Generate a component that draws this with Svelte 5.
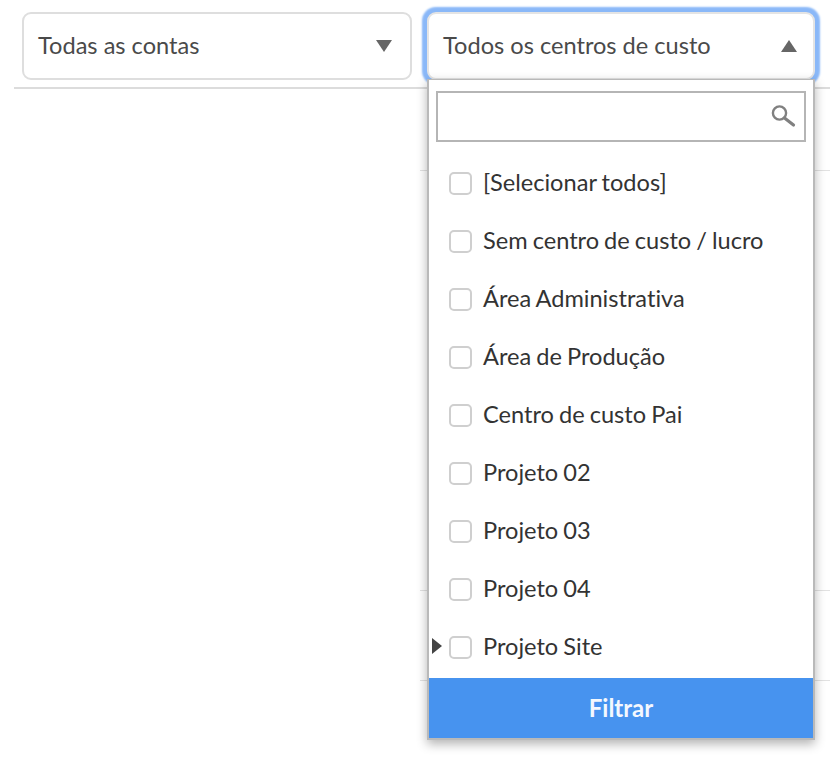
<script>
  const options = [
    { label: '[Selecionar todos]' },
    { label: 'Sem centro de custo / lucro' },
    { label: 'Área Administrativa' },
    { label: 'Área de Produção' },
    { label: 'Centro de custo Pai' },
    { label: 'Projeto 02' },
    { label: 'Projeto 03' },
    { label: 'Projeto 04' },
    { label: 'Projeto Site', expandable: true }
  ];
</script>

<div class="page">
  <div class="filters">
    <button class="select">
      <span>Todas as contas</span>
      <span class="caret down"></span>
    </button>
    <div class="select-wrap">
      <button class="select open">
        <span>Todos os centros de custo</span>
        <span class="caret up"></span>
      </button>
      <div class="dropdown">
        <div class="search">
          <svg width="26" height="26" viewBox="0 0 26 26" fill="none" stroke="#808080">
            <circle cx="8.5" cy="9" r="6.6" stroke-width="2.4" />
            <path d="M13.5 14l9 7" stroke-width="3.2" stroke-linecap="round" />
          </svg>
        </div>
        <ul>
          {#each options as opt}
            <li>
              {#if opt.expandable}<span class="arrow"></span>{/if}
              <span class="check"></span>
              <span>{opt.label}</span>
            </li>
          {/each}
        </ul>
        <button class="apply">Filtrar</button>
      </div>
    </div>
  </div>

  <div class="rows">
    <div class="row" style="height: 81px"></div>
    <div class="row" style="height: 419px"></div>
    <div class="row" style="height: 89px"></div>
  </div>
</div>

<style>
  :global(body) {
    margin: 0;
    background: #fff;
  }

  .page {
    width: 840px;
    height: 764px;
    overflow: hidden;
    font-family: Lato, 'Open Sans', sans-serif;
    font-variant-ligatures: none;
    color: #333;
    word-spacing: -1px;
  }

  .filters {
    display: flex;
    gap: 15px;
    margin-left: 14px;
    margin-right: 10px;
    padding: 12px 0 7px 8px;
    border-bottom: 2px solid #dcdcdc;
  }

  .select-wrap {
    position: relative;
    width: 388px;
  }

  .select {
    display: flex;
    align-items: center;
    justify-content: space-between;
    box-sizing: border-box;
    width: 390px;
    height: 68px;
    padding: 0 18px 2px 14px;
    background: #fff;
    border: 2px solid #dedede;
    border-radius: 9px;
    font: inherit;
    font-size: 23.6px;
    color: #4a4a4a;
  }

  .select.open {
    width: 388px;
    padding: 0 16px 2px 14px;
    border-color: #e4e4e4;
    box-shadow: 0 0 2px 5px #8ab8f8;
  }

  .caret {
    width: 0;
    height: 0;
    margin-top: 2px;
    border-left: 8px solid transparent;
    border-right: 8px solid transparent;
  }

  .caret.down {
    border-top: 12px solid #666;
  }

  .caret.up {
    border-bottom: 12px solid #666;
  }

  .dropdown {
    position: absolute;
    top: 67px;
    left: 0;
    box-sizing: border-box;
    width: 388px;
    height: 661px;
    display: flex;
    flex-direction: column;
    background: #fff;
    border: 2px solid #b9b9b9;
    border-top-width: 1px;
    box-shadow: 0 4px 10px rgba(0, 0, 0, 0.3);
  }

  .search {
    display: flex;
    align-items: center;
    justify-content: flex-end;
    box-sizing: border-box;
    height: 51px;
    margin: 11px 7px 0;
    padding-right: 7px;
    border: 2px solid #b5b5b5;
  }

  ul {
    flex: 1;
    margin: 0;
    padding: 12px 0 0;
    list-style: none;
  }

  li {
    position: relative;
    display: flex;
    align-items: center;
    gap: 11px;
    height: 58px;
    padding-left: 20px;
    font-size: 23.6px;
    color: #333;
  }

  li span:last-child {
    margin-top: -2px;
  }

  .check {
    box-sizing: border-box;
    width: 23px;
    height: 23px;
    background: #fff;
    border: 2px solid #cfcfcf;
    border-radius: 5px;
  }

  .arrow {
    position: absolute;
    left: 3px;
    top: 50%;
    margin-top: -9px;
    border-top: 8px solid transparent;
    border-bottom: 8px solid transparent;
    border-left: 10px solid #444;
  }

  .apply {
    height: 60px;
    padding-bottom: 2px;
    background: #4793ef;
    border: 0;
    font: inherit;
    font-size: 24px;
    font-weight: 700;
    color: #f4f8fe;
  }

  .rows {
    margin: 0 10px 0 420px;
  }

  .row {
    border-bottom: 1px solid #e2e2e2;
  }
</style>
